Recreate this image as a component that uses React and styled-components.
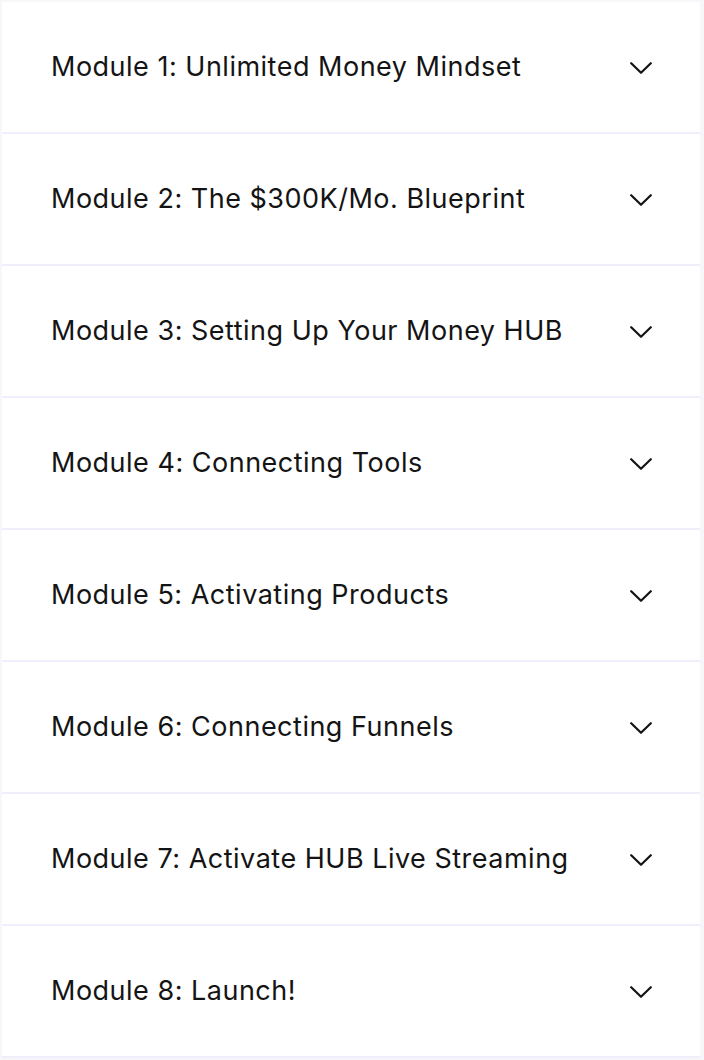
import React from "react";
import styled, { createGlobalStyle } from "styled-components";

const Global = createGlobalStyle`
  html, body { margin: 0; padding: 0; background: #f7f7fa; }
  body { font-family: Inter, "Noto Sans", sans-serif; }
`;

const List = styled.div`
  width: 698px;
  padding: 2px 4px 0 2px;
  display: flex;
  flex-direction: column;
`;

const Item = styled.div`
  height: 130px;
  background: #ffffff;
  border-bottom: 2px solid #eeeffa;
  display: flex;
  align-items: center;
  justify-content: space-between;
  padding: 0 48px 0 49px;
  box-sizing: content-box;
`;

const Title = styled.span`
  font-size: 27px;
  line-height: 32px;
  color: #141414;
  font-weight: 400;
  letter-spacing: 0.5px;
  margin-bottom: 1px;
`;

const Chevron = styled.svg`
  width: 22px;
  height: 12px;
  flex-shrink: 0;
  margin-top: 2px;
`;

const modules = [
  "Module 1: Unlimited Money Mindset",
  "Module 2: The $300K/Mo. Blueprint",
  "Module 3: Setting Up Your Money HUB",
  "Module 4: Connecting Tools",
  "Module 5: Activating Products",
  "Module 6: Connecting Funnels",
  "Module 7: Activate HUB Live Streaming",
  "Module 8: Launch!",
];

export default function App() {
  return (
    <>
      <Global />
      <List>
        {modules.map((m) => (
          <Item key={m}>
            <Title>{m}</Title>
            <Chevron viewBox="0 0 22 12" fill="none">
              <path d="M1.2 1.2 L11 10.8 L20.8 1.2" stroke="#141414" strokeWidth="2.2" strokeLinecap="round" strokeLinejoin="round" />
            </Chevron>
          </Item>
        ))}
      </List>
    </>
  );
}
